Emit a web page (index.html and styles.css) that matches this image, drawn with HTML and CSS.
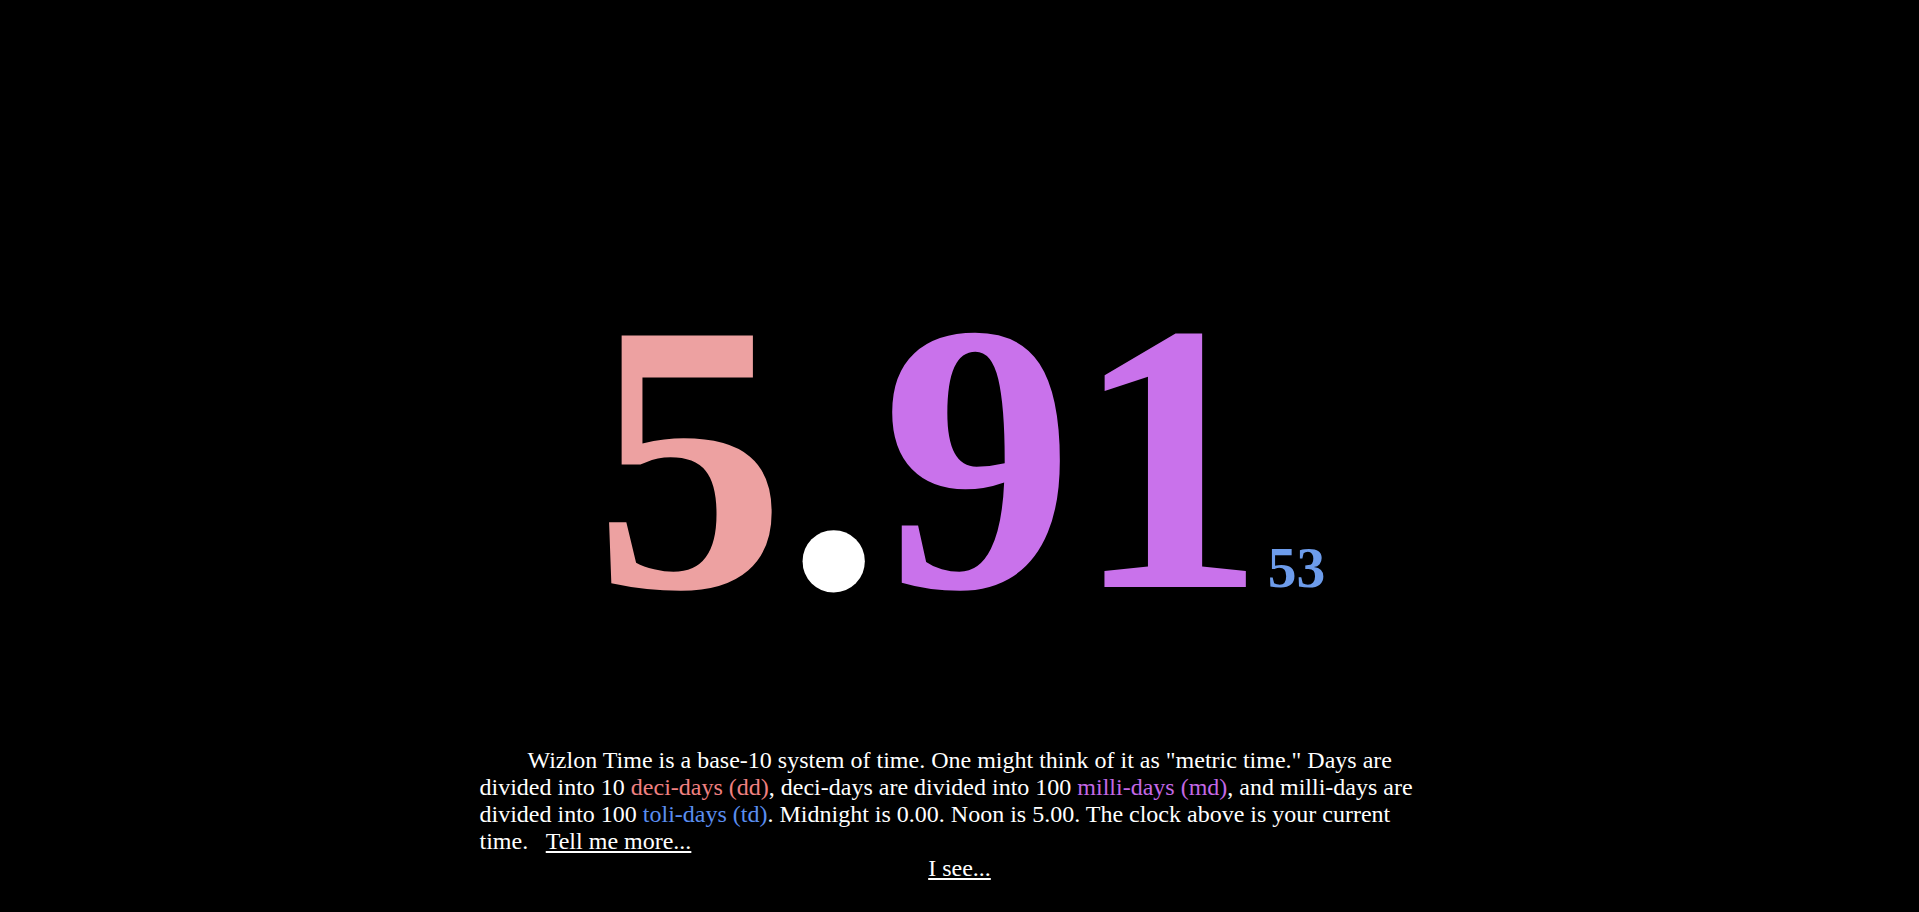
FILE: index.html
```html
<!DOCTYPE html>
<html lang="en">
<head>
<meta charset="utf-8">
<title>Wizlon Time</title>
<link rel="stylesheet" href="styles.css">
</head>
<body>
<main class="page">
  <div class="spacer"></div>
  <div class="clock"><span class="dd">5</span><span class="dot">.</span><span class="md">91</span><span class="td">53</span></div>
  <div class="bottom">
    <p class="about">Wizlon Time is a base-10 system of time. One might think of it as "metric time." Days are divided into 10 <span class="c-dd">deci-days (dd)</span>, deci-days are divided into 100 <span class="c-md">milli-days (md)</span>, and milli-days are divided into 100 <span class="c-td">toli-days (td)</span>. Midnight is 0.00. Noon is 5.00. The clock above is your current time. &nbsp; <a class="link" href="#">Tell me more...</a></p>
    <div class="ok"><a class="link" href="#">I see...</a></div>
  </div>
</main>
</body>
</html>
```

FILE: styles.css
```css
html, body {
  margin: 0;
  padding: 0;
  background: #000;
  color: #fff;
  font-family: "Liberation Serif", "Times New Roman", serif;
}

.page {
  height: 100vh;
  display: grid;
  grid-template-rows: 1fr auto 1fr;
  overflow: hidden;
}

.clock {
  text-align: center;
  font-weight: bold;
  font-size: 384px;
  line-height: normal;
  white-space: nowrap;
  padding-top: 2px;
}

.dd { color: #eda1a1; }
.dot { color: #ffffff; }
.md { color: #c972eb; }
.td {
  color: #6d9ceb;
  font-size: 57.6px;
  margin-left: 2px;
}

.bottom {
  display: flex;
  flex-direction: column;
  justify-content: flex-end;
  align-items: center;
  padding-bottom: 30px;
}

.about {
  width: 960px;
  margin: 0;
  font-size: 24px;
  text-indent: 48px;
  text-align: left;
}

.ok {
  font-size: 24px;
  text-align: center;
}

.c-dd { color: #f08080; }
.c-md { color: #c468e6; }
.c-td { color: #5a8ef0; }

.link {
  color: #fff;
  text-decoration: underline;
}
```
